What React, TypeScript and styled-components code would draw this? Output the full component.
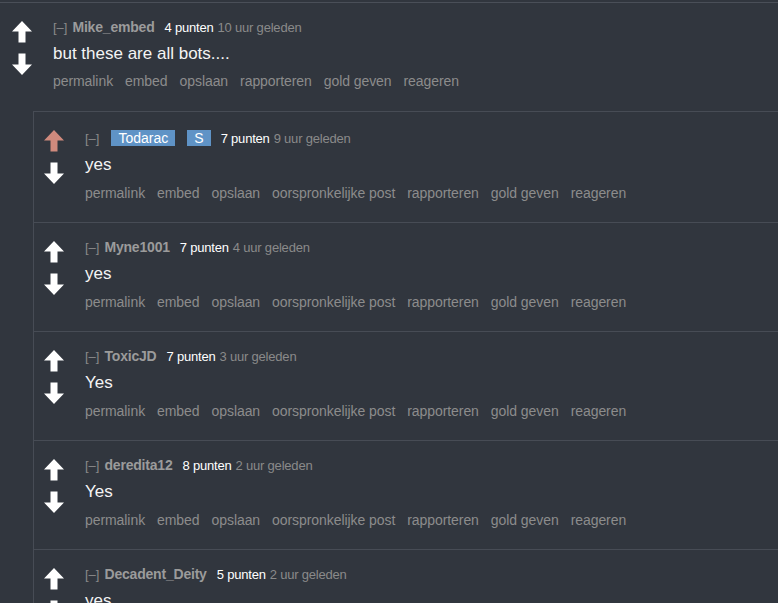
import React from "react";
import styled, { createGlobalStyle } from "styled-components";

const GlobalStyle = createGlobalStyle`
  html, body {
    margin: 0;
    padding: 0;
    overflow: hidden;
    background: #31363e;
    font-family: "Liberation Sans", Arial, sans-serif;
  }
`;

const Page = styled.div`
  padding-top: 2px;
  min-height: 100vh;
  background: #31363e;
`;

const Thread = styled.div`
  border-top: 1px solid #4a4f58;
`;

const Row = styled.div`
  display: flex;
  padding: 16px 0 0 12px;
`;

const ChildRow = styled(Row)`
  padding: 16px 0 21px 10px;
  border-bottom: 1px solid #474c55;
`;

const Votes = styled.div`
  width: 41px;
  flex-shrink: 0;
  display: flex;
  flex-direction: column;
  gap: 10px;
  padding-top: 2px;
`;

const Entry = styled.div`
  flex: 1;
  min-width: 0;
`;

const Tagline = styled.div`
  font-size: 13px;
  line-height: 16px;
  color: #8a8a8a;
  white-space: nowrap;
`;

const Toggle = styled.span`
  color: #8a8a8a;
  margin-right: 5px;
`;

const Author = styled.span`
  font-size: 14px;
  font-weight: bold;
  color: #9b9b9b;
  margin-right: 5px;
  letter-spacing: -0.2px;
`;

const Badge = styled.span`
  display: inline-block;
  margin: 2px 5px 0 7px;
  padding: 0 7px;
  font-size: 14px;
  line-height: 16px;
  color: #fff;
  background: #5f93c6;
`;

const Score = styled.span`
  color: #fff;
  margin-left: 5px;
  letter-spacing: -0.2px;
`;

const Time = styled.span`
  color: #8a8a8a;
  margin-left: 4px;
  letter-spacing: -0.2px;
`;

const Body = styled.div`
  margin-top: 8px;
  font-size: 17px;
  line-height: 20px;
  color: #f4f4f4;
`;

const Buttons = styled.ul<{ $top?: number }>`
  display: flex;
  gap: 12px;
  list-style: none;
  margin: ${(p) => p.$top ?? 10}px 0 0;
  padding: 0;
  font-size: 14px;
  line-height: 16px;
  letter-spacing: -0.07px;
  color: #8c8c8c;
  white-space: nowrap;
`;

const Children = styled.div`
  margin: 22px 0 0 33px;
  border-left: 1px solid #474c55;
  border-top: 1px solid #474c55;
`;

const Arrow = ({ down, color }: { down?: boolean; color?: string }) => (
  <svg
    width="20"
    height="22"
    viewBox="0 0 20 22"
    style={down ? { transform: "rotate(180deg)" } : undefined}
  >
    <polygon
      points="10,0 20,10.5 13.5,10.5 13.5,21.5 6.5,21.5 6.5,10.5 0,10.5"
      fill={color || "#ffffff"}
    />
  </svg>
);

type Reply = {
  author: string;
  badges?: string[];
  points: number;
  time: string;
  text: string;
  upvoted?: boolean;
};

const replies: Reply[] = [
  { author: "Todarac", badges: ["Todarac", "S"], points: 7, time: "9 uur geleden", text: "yes", upvoted: true },
  { author: "Myne1001", points: 7, time: "4 uur geleden", text: "yes" },
  { author: "ToxicJD", points: 7, time: "3 uur geleden", text: "Yes" },
  { author: "deredita12", points: 8, time: "2 uur geleden", text: "Yes" },
  { author: "Decadent_Deity", points: 5, time: "2 uur geleden", text: "yes" },
];

const parentButtons = ["permalink", "embed", "opslaan", "rapporteren", "gold geven", "reageren"];
const childButtons = ["permalink", "embed", "opslaan", "oorspronkelijke post", "rapporteren", "gold geven", "reageren"];

const App = () => {
  return (
    <Page>
      <GlobalStyle />
      <Thread>
        <Row>
          <Votes>
            <Arrow />
            <Arrow down />
          </Votes>
          <Entry>
            <Tagline>
              <Toggle>[–]</Toggle>
              <Author>Mike_embed</Author>
              <Score>4 punten</Score>
              <Time>10 uur geleden</Time>
            </Tagline>
            <Body>but these are all bots....</Body>
            <Buttons $top={9}>
              {parentButtons.map((b) => (
                <li key={b}>{b}</li>
              ))}
            </Buttons>
          </Entry>
        </Row>
        <Children>
          {replies.map((r) => (
            <ChildRow key={r.author}>
              <Votes>
                <Arrow color={r.upvoted ? "#d08a7d" : undefined} />
                <Arrow down />
              </Votes>
              <Entry>
                <Tagline>
                  <Toggle>[–]</Toggle>
                  {r.badges ? (
                    r.badges.map((b) => <Badge key={b}>{b}</Badge>)
                  ) : (
                    <Author>{r.author}</Author>
                  )}
                  <Score>{r.points} punten</Score>
                  <Time>{r.time}</Time>
                </Tagline>
                <Body>{r.text}</Body>
                <Buttons>
                  {childButtons.map((b) => (
                    <li key={b}>{b}</li>
                  ))}
                </Buttons>
              </Entry>
            </ChildRow>
          ))}
        </Children>
      </Thread>
    </Page>
  );
};

export default App;
